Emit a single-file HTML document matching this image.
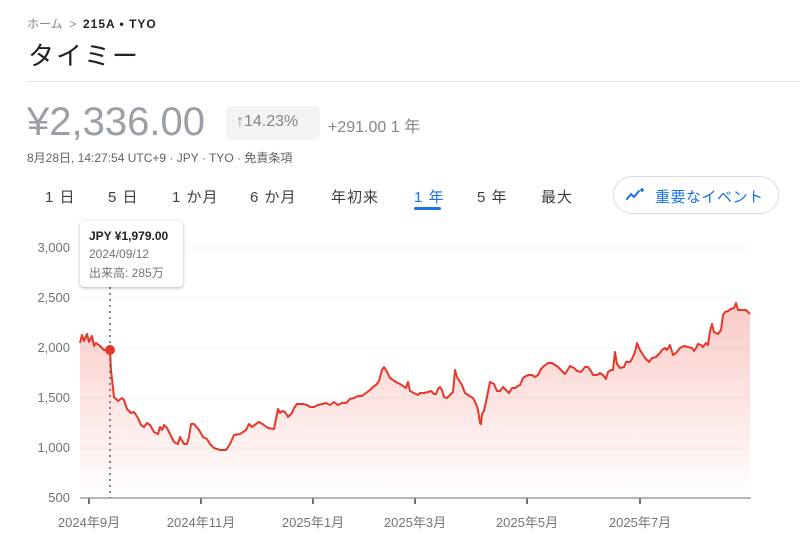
<!DOCTYPE html>
<html><head><meta charset="utf-8"><style>
body{margin:0;width:800px;height:546px;background:#fff;font-family:"Liberation Sans","Noto Sans CJK JP",sans-serif;position:relative;overflow:hidden}
.a{position:absolute;white-space:nowrap}
.tab{position:absolute;top:186px;font-size:15px;color:#3c4043;letter-spacing:1px}
.yl{position:absolute;left:20px;width:50px;text-align:right;font-size:13px;color:#70757a}
.xl{position:absolute;top:512px;font-size:13px;color:#70757a;transform:translateX(-50%)}
</style></head><body>
<div class="a" style="left:27px;top:15px;font-size:12px;color:#80868b">ホーム&nbsp;&nbsp;&gt;&nbsp;&nbsp;<span style="color:#202124;font-weight:bold;letter-spacing:1px">215A • TYO</span></div>
<div class="a" style="left:28px;top:36px;font-size:26px;color:#202124;letter-spacing:2px">タイミー</div>
<div class="a" style="left:27px;top:81px;width:773px;height:1px;background:#e3e3e3"></div>
<div class="a" style="left:27px;top:100px;font-size:40px;color:#9aa0a6">¥2,336.00</div>
<div class="a" style="left:226px;top:106px;width:94px;height:34px;background:#f1f3f4;border-radius:6px"></div>
<div class="a" style="left:236px;top:113px;font-size:16px;color:#80868b">↑14.23%</div>
<div class="a" style="left:328px;top:113px;font-size:16px;color:#80868b">+291.00 1 年</div>
<div class="a" style="left:27px;top:149px;font-size:12px;color:#5f6368">8月28日, 14:27:54 UTC+9 · JPY · TYO · 免責条項</div>
<div class="tab" style="left:45px">1 日</div>
<div class="tab" style="left:108px">5 日</div>
<div class="tab" style="left:172px">1 か月</div>
<div class="tab" style="left:250px">6 か月</div>
<div class="tab" style="left:331px">年初来</div>
<div class="tab" style="left:414px;color:#1a73e8">1 年</div>
<div class="a" style="left:414px;top:207px;width:27px;height:3px;background:#1a73e8;border-radius:2px"></div>
<div class="tab" style="left:477px">5 年</div>
<div class="tab" style="left:541px">最大</div>
<div class="a" style="left:613px;top:176px;width:166px;height:38px;border:1px solid #dadce0;border-radius:20px;box-sizing:border-box"></div>
<svg class="a" style="left:624px;top:185px" width="22" height="22" viewBox="0 0 22 22"><path d="M3 14 L7 9 L10 12 L15 6" stroke="#1a73e8" stroke-width="2" fill="none" stroke-linecap="round" stroke-linejoin="round"/><path d="M18 3v4M16 5h4" stroke="#1a73e8" stroke-width="1.6"/></svg>
<div class="a" style="left:655px;top:186px;font-size:15px;color:#1a73e8;letter-spacing:0.5px">重要なイベント</div>
<div class="yl" style="top:240px">3,000</div>
<div class="yl" style="top:290px">2,500</div>
<div class="yl" style="top:340px">2,000</div>
<div class="yl" style="top:390px">1,500</div>
<div class="yl" style="top:440px">1,000</div>
<div class="yl" style="top:490px">500</div>
<svg class="a" style="left:0;top:0" width="800" height="546">
<defs><linearGradient id="g" x1="0" y1="0" x2="0" y2="1"><stop offset="0" stop-color="#ea4335" stop-opacity="0.28"/><stop offset="1" stop-color="#ea4335" stop-opacity="0"/></linearGradient>
<path id="p" d="M80,343 82,335 84,341 87,334 89,342 92,336 94,346 96,343 100,346 104,350 110,350 111,370 114,397 118,401 122,398 124,400 127,409 131,413 134,412 138,418 141,425 144,427 147,423 150,425 154,432 158,434 160,427 162,430 164,425 167,428 170,434 174,442 178,444 180,437 184,444 187,444 189,437 191,424 194,424 199,430 203,437 207,439 210,444 214,448 220,450 226,450 230,444 234,435 240,434 246,430 249,424 252,427 256,424 259,422 264,425 268,428 274,429 278,409 280,413 282,411 285,412 288,417 292,413 294,408 297,404 303,404 307,405 310,407 314,407 318,405 322,404 326,403 330,405 334,402 338,405 342,403 346,403 350,399 354,398 358,396 362,396 366,393 370,390 373,387 376,385 379,381 382,370 384,367 386,370 390,378 396,382 400,384 403,386 406,388 408,382 410,391 414,393 418,395 420,393 424,393 428,392 431,391 434,394 436,394 438,389 440,387 442,390 444,397 447,398 450,395 453,392 455,370 457,377 462,385 465,393 468,395 473,398 476,404 478,410 480,423 481,424 482,414 484,411 487,397 490,382 494,384 497,391 500,391 503,387 506,390 509,393 512,388 515,388 518,386 520,385 523,378 526,376 529,375 532,375 535,377 538,375 541,369 544,366 548,363 552,363 555,365 558,367 561,370 565,374 567,371 570,366 574,368 577,371 581,372 585,367 588,367 591,371 593,375 597,375 600,373 603,375 606,379 608,372 611,370 613,370 615,352 617,364 620,368 624,367 626,362 630,362 632,359 635,352 637,343 640,350 645,358 649,362 652,358 656,357 659,354 662,350 665,348 667,350 670,345 673,355 676,353 680,348 684,346 688,347 692,348 694,351 696,348 698,344 701,345 703,347 706,343 708,345 710,331 712,324 714,332 718,334 721,330 723,315 725,312 728,311 731,309 734,308 736,303 738,310 742,310 746,310 750,314"/></defs>
<g stroke="#f1f3f4" stroke-width="1"><line x1="80" y1="248" x2="750" y2="248"/><line x1="80" y1="298" x2="750" y2="298"/><line x1="80" y1="348" x2="750" y2="348"/><line x1="80" y1="398" x2="750" y2="398"/><line x1="80" y1="448" x2="750" y2="448"/></g>
<path d="M80,343 82,335 84,341 87,334 89,342 92,336 94,346 96,343 100,346 104,350 110,350 111,370 114,397 118,401 122,398 124,400 127,409 131,413 134,412 138,418 141,425 144,427 147,423 150,425 154,432 158,434 160,427 162,430 164,425 167,428 170,434 174,442 178,444 180,437 184,444 187,444 189,437 191,424 194,424 199,430 203,437 207,439 210,444 214,448 220,450 226,450 230,444 234,435 240,434 246,430 249,424 252,427 256,424 259,422 264,425 268,428 274,429 278,409 280,413 282,411 285,412 288,417 292,413 294,408 297,404 303,404 307,405 310,407 314,407 318,405 322,404 326,403 330,405 334,402 338,405 342,403 346,403 350,399 354,398 358,396 362,396 366,393 370,390 373,387 376,385 379,381 382,370 384,367 386,370 390,378 396,382 400,384 403,386 406,388 408,382 410,391 414,393 418,395 420,393 424,393 428,392 431,391 434,394 436,394 438,389 440,387 442,390 444,397 447,398 450,395 453,392 455,370 457,377 462,385 465,393 468,395 473,398 476,404 478,410 480,423 481,424 482,414 484,411 487,397 490,382 494,384 497,391 500,391 503,387 506,390 509,393 512,388 515,388 518,386 520,385 523,378 526,376 529,375 532,375 535,377 538,375 541,369 544,366 548,363 552,363 555,365 558,367 561,370 565,374 567,371 570,366 574,368 577,371 581,372 585,367 588,367 591,371 593,375 597,375 600,373 603,375 606,379 608,372 611,370 613,370 615,352 617,364 620,368 624,367 626,362 630,362 632,359 635,352 637,343 640,350 645,358 649,362 652,358 656,357 659,354 662,350 665,348 667,350 670,345 673,355 676,353 680,348 684,346 688,347 692,348 694,351 696,348 698,344 701,345 703,347 706,343 708,345 710,331 712,324 714,332 718,334 721,330 723,315 725,312 728,311 731,309 734,308 736,303 738,310 742,310 746,310 750,314 L750,498 L80,498 Z" fill="url(#g)"/>
<use href="#p" fill="none" stroke="#e8372a" stroke-width="2" stroke-linejoin="round"/>
<line x1="80" y1="498" x2="751" y2="498" stroke="#9aa0a6" stroke-width="1.5"/>
<g stroke="#70757a" stroke-width="2"><line x1="89" y1="498" x2="89" y2="504"/><line x1="201" y1="498" x2="201" y2="504"/><line x1="313" y1="498" x2="313" y2="504"/><line x1="415" y1="498" x2="415" y2="504"/><line x1="527" y1="498" x2="527" y2="504"/><line x1="640" y1="498" x2="640" y2="504"/></g>
<line x1="110" y1="287" x2="110" y2="498" stroke="#5f6368" stroke-width="1.5" stroke-dasharray="2,4"/>
<circle cx="110" cy="350" r="5" fill="#e8372a"/>
</svg>
<div class="a" style="left:80px;top:221px;width:103px;height:66px;background:#fff;border-radius:4px;box-shadow:0 1px 3px rgba(0,0,0,.3)"></div>
<div class="a" style="left:89px;top:229px;font-size:12px;color:#202124;font-weight:bold">JPY ¥1,979.00</div>
<div class="a" style="left:89px;top:247px;font-size:12px;color:#70757a">2024/09/12</div>
<div class="a" style="left:89px;top:264px;font-size:12px;color:#70757a">出来高: 285万</div>
<div class="xl" style="left:89px">2024年9月</div>
<div class="xl" style="left:201px">2024年11月</div>
<div class="xl" style="left:313px">2025年1月</div>
<div class="xl" style="left:415px">2025年3月</div>
<div class="xl" style="left:527px">2025年5月</div>
<div class="xl" style="left:640px">2025年7月</div>
</body></html>
